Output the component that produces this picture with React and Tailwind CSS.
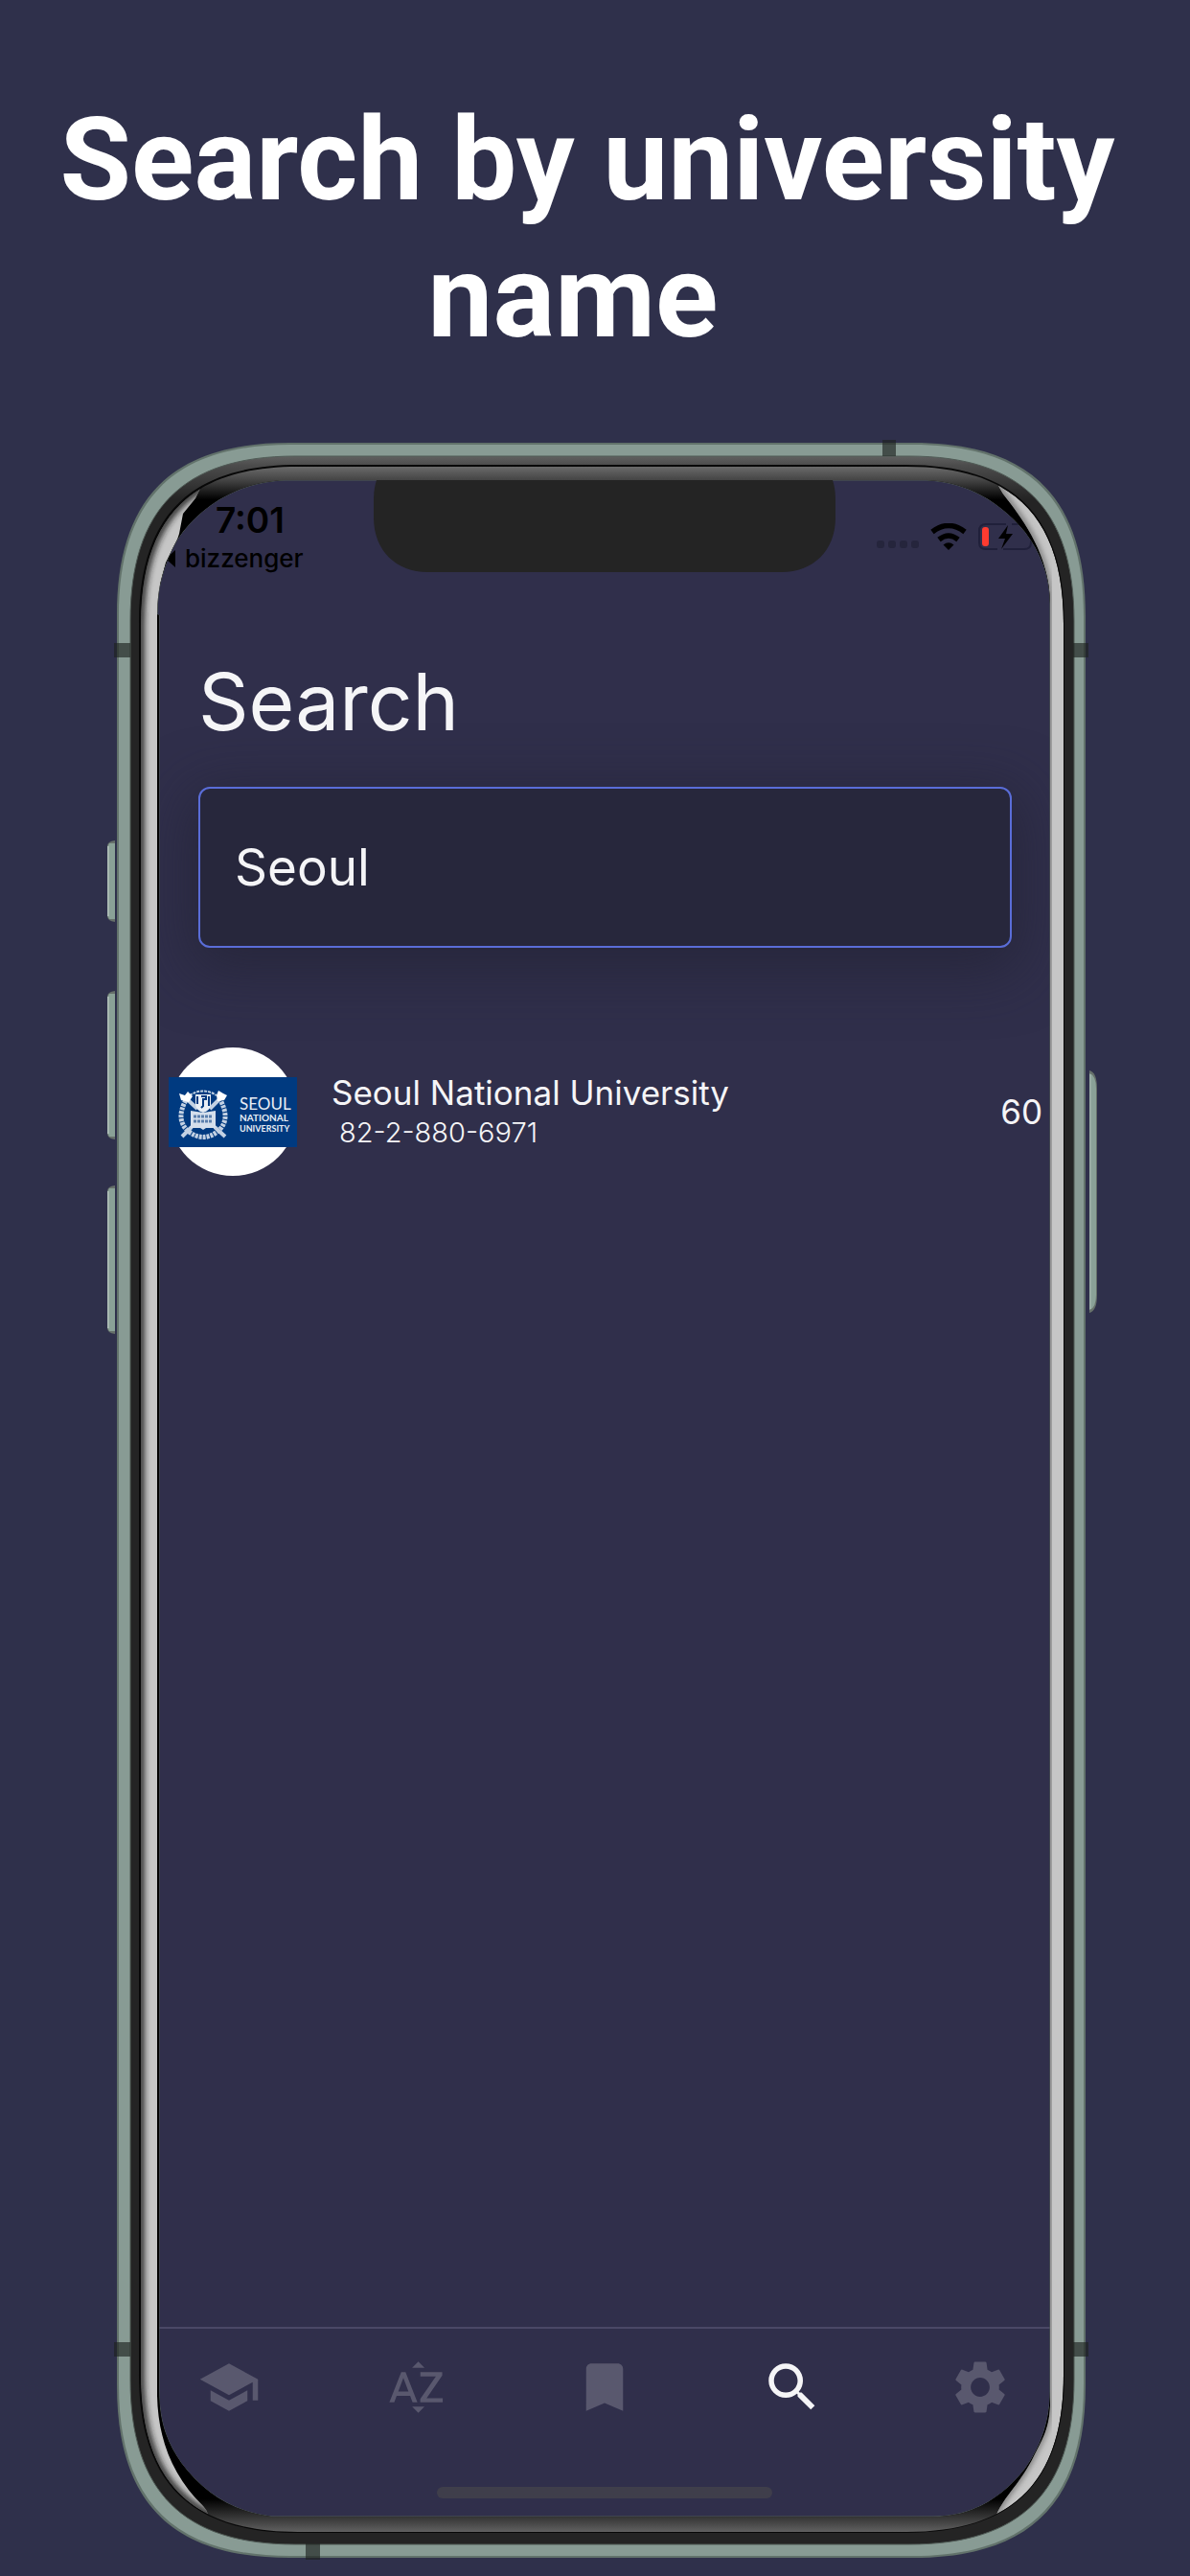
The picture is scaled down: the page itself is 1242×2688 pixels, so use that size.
import React from 'react';
import { MdBookmark, MdSchool, MdSearch, MdSettings, MdSortByAlpha } from 'react-icons/md';

// Superellipse-like rounded box, closer to the real device corners than a circle arc
function squircle(x, y, w, h, r) {
    const k = r * 0.32;
    const x2 = x + w;
    const y2 = y + h;
    return `M${x + r} ${y}H${x2 - r}C${x2 - k} ${y} ${x2} ${y + k} ${x2} ${y + r}V${y2 - r}C${x2} ${y2 - k} ${x2 - k} ${y2} ${x2 - r} ${y2}H${x + r}C${x + k} ${y2} ${x} ${y2 - k} ${x} ${y2 - r}V${y + r}C${x} ${y + k} ${x + k} ${y} ${x + r} ${y}Z`;
}

const OUTER = squircle(122, 462, 1011, 2207, 180);
const GREEN = squircle(124, 464, 1007, 2203, 179);
const DARK = squircle(136, 476, 985, 2179, 172);
const LINE = squircle(145, 485, 966, 2158, 166);
const INNER = squircle(147, 487, 963, 2155, 164);
const SCREEN = 'M297 501H967C1012 503 1046 526 1070 555C1087 577 1096 602 1096 630V2495C1096 2525 1087 2552 1070 2576C1046 2607 1014 2626 975 2626H283C243 2621 212 2601 189 2570C173 2547 166 2525 166 2495V642L164 641C164 612 171 588 185 563C207 530 246 503 297 501Z';

function DeviceFrame() {
    return (
        <svg className="absolute inset-0 w-full h-full pointer-events-none" viewBox="112 459 1034 2212" preserveAspectRatio="none" aria-hidden="true">
            <defs>
                <linearGradient id="rim" gradientUnits="userSpaceOnUse" x1="0" y1="476" x2="0" y2="540">
                    <stop offset="0" stopColor="#606060" />
                    <stop offset="0.15" stopColor="#4c4c4c" />
                    <stop offset="0.7" stopColor="#242424" />
                </linearGradient>
                <linearGradient id="bezel" gradientUnits="userSpaceOnUse" x1="0" y1="487" x2="0" y2="2642">
                    <stop offset="0" stopColor="#6a6a6a" />
                    <stop offset="0.0065" stopColor="#444444" />
                    <stop offset="0.016" stopColor="#000000" />
                    <stop offset="0.984" stopColor="#000000" />
                    <stop offset="0.9925" stopColor="#333333" />
                    <stop offset="1" stopColor="#606060" />
                </linearGradient>
                <filter id="soft" x="-5%" y="-5%" width="110%" height="110%">
                    <feGaussianBlur stdDeviation="3" />
                </filter>
                <clipPath id="ring">
                    <path clipRule="evenodd" d={INNER + SCREEN} />
                </clipPath>
                <clipPath id="silverLeft">
                    <path d="M140 495H216L204 520L191 536L187 557L185 563L173 587L167 610L166 635L164 642V2500C165 2545 180 2584 212 2615Q217 2620 218 2628H140Z" />
                </clipPath>
                <clipPath id="silverRight">
                    <path d="M1115 495H1039Q1040 508 1052 522C1068 543 1096 580 1096 630V2510C1095 2535 1088 2545 1079 2563C1066 2590 1048 2605 1040 2624V2630H1115Z" />
                </clipPath>
            </defs>

            {/* side buttons */}
            {[[877, 85], [1034, 155], [1237, 155]].map(([y, h]) => (
                <g key={y}>
                    <path d={`M120 ${y}Q112 ${y + 1} 112 ${y + 6}V${y + h - 6}Q112 ${y + h - 1} 120 ${y + h}Z`} fill="#66706a" />
                    <path d={`M120 ${y + 3}H114L112 ${y + 7}V${y + h - 7}L114 ${y + h - 3}H120Z`} fill="#8aa197" />
                    <path d={`M113 ${y + 6}V${y + h - 6}`} stroke="#a9b9b2" strokeWidth="2" />
                </g>
            ))}
            <path d="M1137 1117Q1145 1119 1145 1136V1351Q1145 1368 1137 1370Z" fill="#66706a" />
            <path d="M1137 1120Q1144 1122 1144 1136V1351Q1144 1365 1137 1367Z" fill="#8aa197" />
            <path d="M1138 1121V1366" stroke="#a9b9b2" strokeWidth="1" />

            <path fillRule="evenodd" d={OUTER + SCREEN} fill="#62726b" />
            <path fillRule="evenodd" d={GREEN + SCREEN} fill="#889b94" />
            <path fillRule="evenodd" d={DARK + SCREEN} fill="url(#rim)" stroke="#4f5a55" strokeWidth="1" />
            <path fillRule="evenodd" d={LINE + SCREEN} fill="#080808" />
            <path fillRule="evenodd" d={INNER + SCREEN} fill="url(#bezel)" />

            {/* reflective sides */}
            <g clipPath="url(#ring)">
                <g clipPath="url(#silverLeft)">
                    <path d={INNER} fill="#c6c6c6" />
                    <path d={INNER} fill="none" stroke="#222222" strokeWidth="7" filter="url(#soft)" />
                </g>
                <g clipPath="url(#silverRight)">
                    <path d={INNER} fill="#c6c6c6" />
                    <path d="M1039 495Q1040 508 1052 522C1068 543 1095 580 1095 630V2510C1094 2535 1087 2545 1078 2563C1065 2590 1047 2605 1039 2624" fill="none" stroke="#555555" strokeWidth="4" filter="url(#soft)" />
                </g>
            </g>

            {/* antenna breaks */}
            <g fill="#1f2420" fillOpacity="0.65">
                <path d="M921 459h14v17h-14zM319 2654h15v17h-15z" />
                <path d="M119 671h17v15h-17zM1120 671h16v15h-16z" />
                <path d="M119 2444h17v15h-17zM1120 2444h16v15h-16z" />
            </g>

            <path d="M393 501Q390 510 390 521V540C390 575 414 597 446 597H816C848 597 872 575 872 540V521Q872 510 869 501Z" fill="#242424" />
        </svg>
    );
}

function StatusBar() {
    return (
        <div className="flex justify-between text-black">
            <div className="pt-6 pl-2">
                <div className="pl-[51px] text-[37px] leading-[36px] font-semibold">7:01</div>
                <a href="#back" className="mt-1 flex items-center gap-[10px] text-[26px] leading-[36px] font-medium">
                    <svg className="w-[9px] h-[18px]" viewBox="0 0 9 18" aria-hidden="true">
                        <path d="M9 0V18L0 10V8Z" />
                    </svg>
                    bizzenger
                </a>
            </div>
            <div className="flex h-[30px] mt-11 mr-[18px] items-center gap-3">
                <div className="flex gap-1 pt-4">
                    {[0, 1, 2, 3].map((dot) => (
                        <span key={dot} className="w-2 h-2 rounded-[3px] bg-[#25253c]"></span>
                    ))}
                </div>
                <svg className="w-[38px] h-7" viewBox="0 0 38 28" aria-hidden="true">
                    <path d="M2 9Q19 -4 36 9" fill="none" stroke="#000" strokeWidth="5.500" />
                    <path d="M9 17Q19 9 29 17" fill="none" stroke="#000" strokeWidth="5.500" />
                    <path d="M13.500 22.500Q19 18 24.500 22.500L19 28Z" />
                </svg>
                <svg className="w-[57px] h-[30px]" viewBox="0 0 57 30" fill="none" aria-hidden="true">
                    <path d="M29 2H8Q1 2 1 9V21Q1 28 8 28H20M35 2H48Q55 2 55 9V21Q55 28 48 28H26" stroke="#20203a" strokeWidth="2" />
                    <rect x="4" y="5" width="7" height="20" rx="3" fill="#ff3b30" />
                    <path d="M31 3L21 17H28L24 28L36 12H29Z" fill="#000" />
                </svg>
            </div>
        </div>
    );
}

function SnuLogo() {
    return (
        <svg className="w-[134px] h-[73px] shrink-0" viewBox="0 0 134 73" role="img" aria-label="Seoul National University logo">
            <rect width="134" height="73" fill="#003a80" />
            <g fill="none" stroke="#c3d1e3">
                <path d="M18 24Q7 44 20 56Q36 69 52 56Q65 44 54 24" strokeWidth="5" strokeDasharray="3 1" />
                <path d="M22 19Q36 10 50 19" strokeWidth="2" strokeDasharray="3 1" />
                <path d="M16 20L30 33M56 20L43 33M24 52L14 62M48 52L59 62" strokeWidth="4" />
            </g>
            <path d="M11 17L17 19L20 15L25 20L21 26L13 24ZM50 19L52 14L57 17L61 19L58 24L51 25Z" fill="#fff" />
            <path d="M28 18H44V29Q43 35 36 37Q29 35 28 29Z" fill="#e8eef5" />
            <path d="M34 20H39V23H36V30L34 32M42 20V30M30 20V28" stroke="#003a80" strokeWidth="2" fill="none" />
            <path d="M23 35L36 37L49 35V53H39L36 55L33 53H23Z" fill="#d5dfec" />
            <path d="M26 41H46M26 46H46" stroke="#5b7fac" strokeWidth="3" strokeDasharray="3 1" />
            <g fill="#e8eef5" fontFamily="Lato, sans-serif" fontWeight="400">
                <text x="74" y="34" fontSize="17">SEOUL</text>
                <text x="74" y="46" fontSize="10" fontWeight="700">NATIONAL</text>
                <text x="74" y="57" fontSize="9" fontWeight="700">UNIVERSITY</text>
            </g>
        </svg>
    );
}

const results = [
    { id: 1, name: 'Seoul National University', phone: '82-2-880-6971', rank: 60 },
];

const tabs = [
    { label: 'Universities', Icon: MdSchool },
    { label: 'Sort by name', Icon: MdSortByAlpha },
    { label: 'Bookmarks', Icon: MdBookmark },
    { label: 'Search', Icon: MdSearch, active: true },
    { label: 'Settings', Icon: MdSettings },
];

export default function App() {
    return (
        <div className="min-h-screen flex flex-col bg-[#2f304b] pb-[17px]">
            <h1 className="pt-24 pb-[77px] pr-4 text-center text-white font-bold text-[121px] leading-[143px] font-['Roboto',sans-serif]">
                Search by university<br />
                name&nbsp;
            </h1>

            <div className="relative flex-1 flex flex-col ml-28 mr-24 pt-[42px] pb-[45px] pl-[54px] pr-[50px] font-['Inter',sans-serif]">
                <div className="flex-1 flex flex-col overflow-hidden bg-[#302f4b] text-[#f5f5f7]">
                    <StatusBar />

                    <main className="flex-1">
                        <div className="pl-[41px] pr-10 mt-20">
                            <label htmlFor="search" className="block text-[82px] leading-[104px]">Search</label>
                            <input
                                id="search"
                                type="text"
                                defaultValue="Seoul"
                                className="block w-full mt-9 h-[168px] px-9 rounded-xl border-[2px] border-[#5a6dd8] bg-[#27273c] text-[53px] outline-none shadow-[0_15px_60px_10px_rgba(34,34,50,0.6)]"
                            />
                        </div>

                        <ul className="mt-[104px]">
                            {results.map((item) => (
                                <li key={item.id} className="flex items-center pl-[10px] pr-2">
                                    <div className="w-[134px] h-[134px] rounded-full bg-white flex items-center justify-center">
                                        <SnuLogo />
                                    </div>
                                    <div className="ml-9 flex-1">
                                        <div className="text-[35px] leading-[44px]">{item.name}</div>
                                        <div className="pl-2 text-[29px] leading-[40px] font-light">{item.phone}</div>
                                    </div>
                                    <span className="text-[35px] leading-[44px]">{item.rank}</span>
                                </li>
                            ))}
                        </ul>
                    </main>

                    <nav className="border-t-2 border-[#4a4866] px-10 pt-7 pb-[19px]">
                        <div className="flex justify-between">
                            {tabs.map(({ label, Icon, active }) => (
                                <button key={label} type="button" aria-label={label} className={active ? 'text-[#f5f5f7]' : 'text-[#59586e]'}>
                                    <Icon className="w-[66px] h-[66px]" />
                                </button>
                            ))}
                        </div>
                        <div className="mt-[71px] mx-auto w-[350px] h-3 rounded-full bg-[#3f3e4b]"></div>
                    </nav>
                </div>
                <DeviceFrame />
            </div>
        </div>
    );
}
